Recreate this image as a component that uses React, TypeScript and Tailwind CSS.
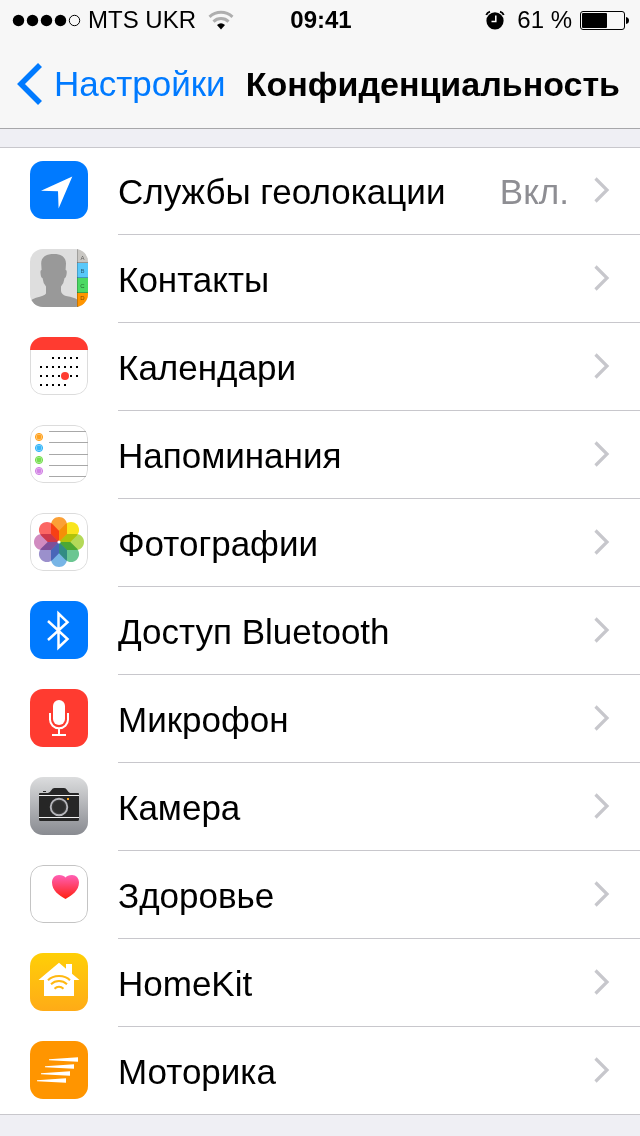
import type { ReactNode } from 'react';

type Row = { label: string; icon: ReactNode; value?: string };

function Tile({ className, children }: { className: string; children: ReactNode }) {
  return (
    <span className={`block size-[58px] shrink-0 overflow-hidden rounded-[13px] ${className}`}>
      <svg viewBox="0 0 58 58" className="block size-[58px]" aria-hidden="true">
        {children}
      </svg>
    </span>
  );
}

const outline = (color: string) => (
  <rect x="0.5" y="0.5" width="57" height="57" rx="12.5" fill="none" stroke={color} />
);

function LocationIcon() {
  return (
    <Tile className="bg-[#007aff]">
      <path d="M11 29.800 42.300 15.500 28.600 47.500 28 30.300Z" fill="#fff" />
    </Tile>
  );
}

function ContactsIcon() {
  const tabs = [
    { y: 0, h: 14, fill: '#c9c7c3', letter: 'A', base: 11 },
    { y: 14, h: 15, fill: '#5ac8fa', letter: 'B', base: 24 },
    { y: 29, h: 15, fill: '#4cd964', letter: 'C', base: 39 },
    { y: 44, h: 14, fill: '#ff9500', letter: 'D', base: 51 },
  ];
  return (
    <Tile className="bg-[#dedede]">
      <path
        d="M24 5C31 5 36 8 36 14.500L35.600 21Q37.200 21 36.600 25 36 29 34.600 29 34 34 31 37.500V42Q31.500 45.500 36 47 45 48.500 47 50.500V58H0V52Q2 50 6 48.800 14.500 47 16 44.500V37.500Q13 34 12.500 29 11 29 10.600 25 10 21 11.600 21L11.200 14.500C11.200 8 16 5 24 5Z"
        fill="#999"
      />
      {tabs.map((t) => (
        <g key={t.letter}>
          <rect x="47" y={t.y} width="11" height={t.h} fill={t.fill} />
          <rect x="47" y={t.y + t.h - 1} width="11" height="1" fill="#000" opacity="0.25" />
          <text x="52.500" y={t.base} fontSize="6" fontFamily="Liberation Sans, sans-serif" textAnchor="middle" fill="#000" opacity="0.55">
            {t.letter}
          </text>
        </g>
      ))}
      <rect x="47" width="1" height="58" fill="#000" opacity="0.2" />
    </Tile>
  );
}

function CalendarIcon() {
  const weeks = [
    { y: 21, xs: [23, 29, 35, 41, 47] },
    { y: 30, xs: [11, 17, 23, 29, 35, 41, 47] },
    { y: 39, xs: [11, 17, 23, 29, 41, 47] },
    { y: 48, xs: [11, 17, 23, 29, 35] },
  ];
  return (
    <Tile className="bg-white">
      {outline('#dcdcdc')}
      <rect width="58" height="13" fill="#ff3b30" />
      {weeks.map((w) => w.xs.map((x) => <rect key={`${x}-${w.y}`} x={x - 1} y={w.y - 1} width="2" height="2" />))}
      <circle cx="35" cy="39" r="4" fill="#ff3b30" />
    </Tile>
  );
}

function RemindersIcon() {
  const bullets = [
    { y: 12, fill: '#ff9500' },
    { y: 23, fill: '#1badf8' },
    { y: 35, fill: '#63da38' },
    { y: 46, fill: '#cc73e1' },
  ];
  return (
    <Tile className="bg-white">
      {outline('#dcdcdc')}
      {bullets.map((b) => (
        <g key={b.y}>
          <circle cx="9" cy={b.y} r="3.600" fill={b.fill} fillOpacity="0.4" stroke={b.fill} strokeWidth="0.900" />
          <circle cx="9" cy={b.y} r="2.400" fill={b.fill} opacity="0.8" />
        </g>
      ))}
      <path d="M19 6.500H56M19 17.500H58M19 29.500H58M19 40.500H58M19 51.500H56" stroke="#a8a8a8" />
    </Tile>
  );
}

function PhotosIcon() {
  const petals = ['#fba036', '#f9e51e', '#b4d958', '#6bc692', '#77b5e6', '#9b90cc', '#d18bc0', '#fb6663'];
  return (
    <Tile className="bg-white">
      {outline('#dcdcdc')}
      <g className="isolate">
        {petals.map((fill, i) => (
          <path
            key={fill}
            d="M29 4C33.500 4 37 7.500 37 12V21L29 29 21 21V12C21 7.500 24.500 4 29 4Z"
            transform={`rotate(${i * 45} 29 29)`}
            fill={fill}
            className="mix-blend-multiply"
          />
        ))}
      </g>
      <circle cx="29" cy="29" r="1.600" fill="#fff" />
    </Tile>
  );
}

function BluetoothIcon() {
  return (
    <Tile className="bg-[#007aff]">
      <path d="M18 20 37.500 38 28.500 46.500V12.500L37.500 21.200 18 39" fill="none" stroke="#fff" strokeWidth="2.500" />
    </Tile>
  );
}

function MicrophoneIcon() {
  return (
    <Tile className="bg-[#ff3b30]">
      <rect x="23" y="11" width="12" height="25" rx="6" fill="#fff" />
      <path d="M20 24V30.500A9 8.800 0 0 0 38 30.500V24M29 39.500V46M22 46H36" fill="none" stroke="#fff" strokeWidth="2" />
    </Tile>
  );
}

function CameraIcon() {
  return (
    <Tile className="bg-linear-to-b from-[#dcddde] to-[#898b91]">
      <path d="M13 14H16V15H13ZM9 17Q9 16 10 16H18Q20 15.500 21.500 13 22.500 11 24.500 11H34Q36 11 37 13 38.500 15.500 40 16H48Q49 16 49 17V42.500Q49 44 47.500 44H10.500Q9 44 9 42.500Z" fill="#262626" />
      <path d="M9 18.500H49M9 40.500H49" stroke="#f2f2f2" />
      <circle cx="29" cy="30" r="8.300" fill="#3a3a3a" stroke="#b5b5ba" strokeWidth="1.900" />
      <circle cx="29" cy="30" r="6" fill="#2e2e2e" />
      <rect x="37" y="21" width="2" height="2" fill="#f5a623" />
    </Tile>
  );
}

function HealthIcon() {
  return (
    <Tile className="bg-white">
      <defs>
        <linearGradient id="heart" x1="0" y1="0" x2="0" y2="1">
          <stop offset="0" stopColor="#ff5fb5" />
          <stop offset="1" stopColor="#ff2010" />
        </linearGradient>
      </defs>
      {outline('#c4c4c4')}
      <path d="M35.500 34C29 30.500 22 25.500 22 17.500 22 13 25 10 29 10 32 10 34.500 11 35.500 12.500 36.500 11 39 10 42 10 46 10 49 13 49 17.500 49 25.500 42 30.500 35.500 34Z" fill="url(#heart)" />
    </Tile>
  );
}

function HomeKitIcon() {
  return (
    <Tile className="bg-linear-to-b from-[#ffcf05] to-[#ffab16]">
      <path d="M29 9.700 36 15.700V11H42V20.800L49.500 27H44V43H14V27H8.500Z" fill="#fff" />
      <path d="M18 27.300Q22 23 29 23T40 27.300M21 31.200Q24.500 28 29 28T37 31.200M24.500 35.700Q26.500 33.800 29 33.800T33.500 35.700" fill="none" stroke="#ffb811" strokeWidth="2" />
    </Tile>
  );
}

function MotionIcon() {
  return (
    <Tile className="bg-[#ff9500]">
      <path d="M19 18.300 48 16.300V20.700L19 19.300ZM15 25.300 44 23.300V27.700L15 26.300ZM11 32.300 40 30.300V34.700L11 33.300ZM7 39.300 36 37.300V41.700L7 40.300Z" fill="#fff" />
    </Tile>
  );
}

const rows: Row[] = [
  { label: 'Службы геолокации', icon: <LocationIcon />, value: 'Вкл.' },
  { label: 'Контакты', icon: <ContactsIcon /> },
  { label: 'Календари', icon: <CalendarIcon /> },
  { label: 'Напоминания', icon: <RemindersIcon /> },
  { label: 'Фотографии', icon: <PhotosIcon /> },
  { label: 'Доступ Bluetooth', icon: <BluetoothIcon /> },
  { label: 'Микрофон', icon: <MicrophoneIcon /> },
  { label: 'Камера', icon: <CameraIcon /> },
  { label: 'Здоровье', icon: <HealthIcon /> },
  { label: 'HomeKit', icon: <HomeKitIcon /> },
  { label: 'Моторика', icon: <MotionIcon /> },
];

function StatusBar() {
  return (
    <div className="grid h-10 grid-cols-[1fr_auto_1fr] items-center pr-2.5 pl-3 text-2xl leading-10">
      <div className="flex items-center">
        <svg width="70" height="14" viewBox="0 0 70 14" className="mr-1.5 shrink-0" aria-hidden="true">
          {[7, 21, 35, 49].map((cx) => (
            <circle key={cx} cx={cx - 0.5} cy="7.500" r="5.700" />
          ))}
          <circle cx="62.500" cy="7.500" r="5.200" fill="none" stroke="#000" />
        </svg>
        <span className="whitespace-nowrap">MTS UKR</span>
        <svg width="26" height="20" viewBox="0 0 26 20" className="ml-3 shrink-0" fill="none" aria-hidden="true">
          <path d="M1.500 6.800Q6.500 2.300 13 2.300T24.500 6.800" stroke="#aeaeae" strokeWidth="3" />
          <path d="M5.500 11.600Q8.500 8.600 13 8.600T20.500 11.600" stroke="#aeaeae" strokeWidth="3" />
          <path d="M13 19.500 9 15Q13 11.500 17 15Z" fill="#000" />
        </svg>
      </div>
      <time className="font-bold">09:41</time>
      <div className="flex items-center justify-end">
        <svg width="20" height="20" viewBox="0 0 20 20" className="mr-3 shrink-0" fill="none" aria-hidden="true">
          <circle cx="10" cy="10.800" r="8.600" fill="#000" />
          <path d="M1.300 5Q2.200 2.500 5 1.700M18.700 5Q17.800 2.500 15 1.700" stroke="#000" strokeWidth="1.900" />
          <path d="M10.800 5.500V11.500H6.500" stroke="#fff" strokeWidth="1.500" />
        </svg>
        <span className="whitespace-nowrap">61 %</span>
        <svg width="50" height="20" viewBox="0 0 50 20" className="ml-2 shrink-0" fill="none" aria-hidden="true">
          <rect x="0.500" y="1.500" width="44" height="18" rx="2.500" stroke="#000" />
          <rect x="2" y="3" width="25" height="15" rx="1" fill="#000" />
          <path d="M46 7Q49 7.500 49 10.500T46 14Z" fill="#000" />
        </svg>
      </div>
    </div>
  );
}

export default function App() {
  return (
    <div className="min-h-screen bg-[#efeff4] font-['Liberation_Sans',Arial,sans-serif] text-black">
      <header className="border-b border-[#a7a7aa] bg-[#f7f7f7]">
        <StatusBar />
        <nav className="flex h-[88px] items-center justify-between pr-5 pl-4">
          <a href="#settings" className="flex items-center gap-3 text-[35px] leading-[44px] text-[#007aff]">
            <svg width="26" height="42" viewBox="0 0 26 42" fill="none" className="shrink-0" aria-hidden="true">
              <path d="M24 2 5 21 24 40" stroke="currentColor" strokeWidth="5.600" />
            </svg>
            Настройки
          </a>
          <h1 className="text-[34px] leading-[44px] font-bold whitespace-nowrap">Конфиденциальность</h1>
        </nav>
      </header>
      <main className="pt-[18px]">
        <ul className="border-y border-[#c8c7cc] bg-white">
          {rows.map((row) => (
            <li key={row.label} className="group">
              <a href="#row" className="flex h-[88px] pl-[30px] group-first:h-[87px] group-last:h-[87px]">
                <span className="pt-3.5 group-first:pt-[13px]">{row.icon}</span>
                <span className="ml-[30px] flex grow items-center border-b border-[#c8c7cc] pr-[30px] group-last:border-b-0">
                  <span className="grow pt-0.5 text-[35px] leading-[44px]">{row.label}</span>
                  {row.value && <span className="mr-6 pt-0.5 text-[35px] leading-[44px] text-[#8e8e93]">{row.value}</span>}
                  <svg width="17" height="28" viewBox="0 0 17 28" fill="none" className="shrink-0" aria-hidden="true">
                    <path d="M2.500 1.500 14 13 2.500 24.500" stroke="#c7c7cc" strokeWidth="3.200" />
                  </svg>
                </span>
              </a>
            </li>
          ))}
        </ul>
      </main>
    </div>
  );
}
